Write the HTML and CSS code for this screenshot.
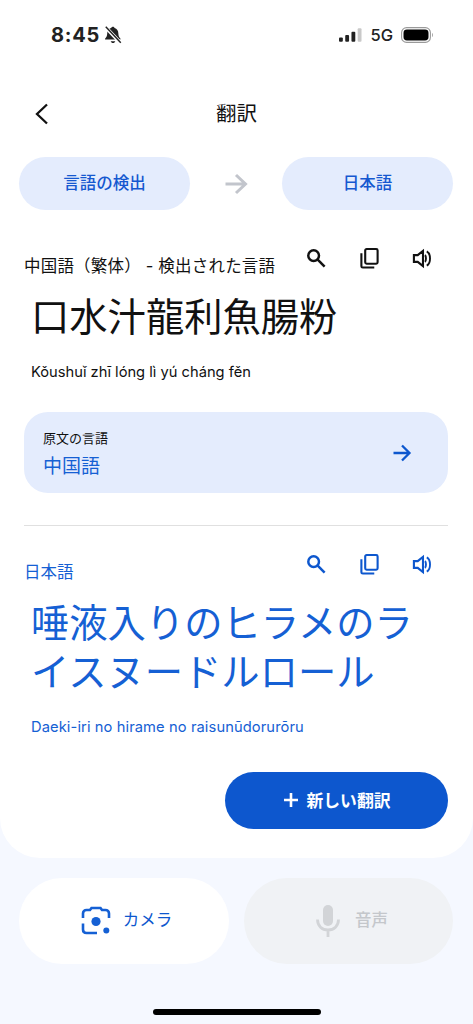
FILE: index.html
```html
<!DOCTYPE html>
<html lang="ja">
<head>
    <meta charset="UTF-8">
    <meta name="viewport" content="width=device-width, initial-scale=1.0">
    <title>翻訳</title>
    <link rel="stylesheet" href="styles.css">
</head>
<body>
    <div class="sheet">
        <!-- status bar -->
        <div class="status-bar">
            <div class="status-left">
                <span class="time">8:45</span>
                <svg class="bell" width="20" height="20" viewBox="0 0 18 18">
                    <path d="M9 1.500c.8 0 1.300.5 1.400 1.200 2.200.6 3.400 2.400 3.400 4.800 0 2.600.8 3.600 1.800 4.600.4.4.2 1-.4 1H2.400c-.6 0-.8-.6-.4-1 1-1 1.800-2 1.800-4.600 0-2.400 1.200-4.200 3.400-4.800C7.700 2 8.200 1.500 9 1.500z" fill="#222"/>
                    <path d="M7 14.600h4c-.2 1-1 1.700-2 1.700s-1.800-.7-2-1.700z" fill="#222"/>
                    <path d="M2 1.500l14 15" stroke="#fff" stroke-width="3.200"/>
                    <path d="M2.500 1.500l13.500 14.500" stroke="#222" stroke-width="1.300"/>
                </svg>
            </div>
            <div class="status-right">
                <svg width="23" height="15" viewBox="0 0 24 15">
                    <rect x="0" y="9.500" width="4" height="4.500" rx="1" fill="#222"/>
                    <rect x="6.500" y="7" width="4" height="7" rx="1" fill="#222"/>
                    <rect x="13" y="3.500" width="4" height="10.500" rx="1" fill="#222"/>
                    <rect x="19.500" y="0" width="4" height="14" rx="1" fill="#c9c9c9"/>
                </svg>
                <span class="network">5G</span>
                <svg width="32" height="16" viewBox="0 0 32 16">
                    <rect x="0.600" y="0.600" width="28.800" height="14.800" rx="5" fill="none" stroke="#9a9a9a" stroke-width="1.100"/>
                    <rect x="2.500" y="2.500" width="25" height="11" rx="3.400" fill="#000"/>
                    <path d="M31 6v4c.7-.3 1-1.200 1-2s-.3-1.700-1-2z" fill="#a8a8a8"/>
                </svg>
            </div>
        </div>

        <!-- title -->
        <div class="nav">
            <svg class="back" width="16" height="24" viewBox="0 0 16 24">
                <path d="M13 2.500L3 12l10 9.500" fill="none" stroke="#111" stroke-width="2.300"/>
            </svg>
            <h1>翻訳</h1>
        </div>

        <!-- language choice -->
        <div class="lang-row">
            <div class="lang-pill">言語の検出</div>
            <svg width="24" height="22" viewBox="0 0 24 22">
                <path d="M1.500 11h20M12 2l9.500 9-9.500 9" fill="none" stroke="#c2c5cc" stroke-width="3"/>
            </svg>
            <div class="lang-pill">日本語</div>
        </div>

        <!-- source -->
        <section class="source">
            <div class="label-row">
                <span class="lang-label">中国語（繁体） - 検出された言語</span>
                <div class="actions">
                    <svg width="21" height="21" viewBox="0 0 22 22"><use href="#icon-search"/></svg>
                    <svg width="21" height="23" viewBox="0 0 22 24"><use href="#icon-copy"/></svg>
                    <svg width="21" height="21" viewBox="0 0 22 22"><use href="#icon-sound"/></svg>
                </div>
            </div>
            <p class="big-text">口水汁龍利魚腸粉</p>
            <p class="reading">Kǒushuǐ zhī lóng lì yú cháng fěn</p>
            <div class="source-card">
                <div class="card-text">
                    <div class="card-label">原文の言語</div>
                    <div class="card-value">中国語</div>
                </div>
                <svg width="20" height="18" viewBox="0 0 20 18">
                    <path d="M1.500 9h16M10 1.500L17.500 9 10 16.500" fill="none" stroke="#0d57ce" stroke-width="2.300"/>
                </svg>
            </div>
        </section>

        <hr class="divider">

        <!-- translation -->
        <section class="target">
            <div class="label-row">
                <span class="lang-label">日本語</span>
                <div class="actions">
                    <svg width="21" height="21" viewBox="0 0 22 22"><use href="#icon-search"/></svg>
                    <svg width="21" height="23" viewBox="0 0 22 24"><use href="#icon-copy"/></svg>
                    <svg width="21" height="21" viewBox="0 0 22 22"><use href="#icon-sound"/></svg>
                </div>
            </div>
            <p class="big-text">唾液入りのヒラメのライスヌードルロール</p>
            <p class="reading">Daeki-iri no hirame no raisunūdorurōru</p>
        </section>

        <div class="new-row">
            <button class="new-btn">
                <svg width="16" height="16" viewBox="0 0 16 16">
                    <path d="M8 1v14M1 8h14" stroke="#fff" stroke-width="2.600"/>
                </svg>
                新しい翻訳
            </button>
        </div>
    </div>

    <!-- input modes -->
    <div class="mode-row">
        <div class="mode-pill">
            <svg width="30" height="30" viewBox="0 0 30 30">
                <path d="M2 12V7.500C2 5.500 3.500 4 5.500 4H9l1.500-2h9L21 4h3.500C26.500 4 28 5.500 28 7.500V12" fill="none" stroke="#1560d4" stroke-width="2.600"/>
                <path d="M2 17.500v6C2 25.800 3.500 27 5.500 27H16" fill="none" stroke="#1560d4" stroke-width="2.600"/>
                <circle cx="15" cy="15.500" r="4.600" fill="#1560d4"/>
                <circle cx="25.300" cy="24.500" r="3" fill="#1560d4"/>
            </svg>
            <span>カメラ</span>
        </div>
        <div class="mode-pill off">
            <svg width="24" height="34" viewBox="0 0 24 34">
                <rect x="7" y="1" width="10" height="21" rx="5" fill="#d2d4d7"/>
                <path d="M1.500 15.500c0 6.500 4.500 10.500 10.500 10.500s10.500-4 10.500-10.500M12 26v7" fill="none" stroke="#d2d4d7" stroke-width="2.800"/>
            </svg>
            <span>音声</span>
        </div>
    </div>

    <div class="home-bar"></div>

    <!-- shared icons -->
    <svg class="defs" width="0" height="0">
        <defs>
            <g id="icon-search" fill="none" stroke="currentColor" stroke-width="2.600">
                <circle cx="8" cy="8" r="5.600"/>
                <path d="M12 12l7.500 7.500"/>
            </g>
            <g id="icon-copy" fill="none" stroke="currentColor" stroke-width="2.200">
                <rect x="6.500" y="2" width="13" height="15.500" rx="1.500"/>
                <path d="M2.500 6.500V20c0 1 .6 1.500 1.500 1.500h12"/>
            </g>
            <g id="icon-sound">
                <path d="M2 7.500h4L11.500 3v16L6 14.500H2z" fill="none" stroke="currentColor" stroke-width="2.200"/>
                <path d="M13.500 7.500c1.500 1 1.500 6 0 7" fill="none" stroke="currentColor" stroke-width="2"/>
                <path d="M15.500 3.500c4.500 2.500 4.500 12.500 0 15" fill="none" stroke="currentColor" stroke-width="2"/>
            </g>
        </defs>
    </svg>
</body>
</html>
```

FILE: styles.css
```css
body {
    font-family: "Inter", "Noto Sans CJK JP", sans-serif;
    background-color: #f5f8ff;
    margin: 0;
    padding: 0;
    color: #111;
}

p, h1 {
    margin: 0;
    font-weight: 400;
}

.defs {
    display: block;
}

.sheet {
    background: #fff;
    height: 858px;
    border-radius: 0 0 40px 40px;
    box-sizing: border-box;
    overflow: hidden;
}

.status-bar {
    display: flex;
    justify-content: space-between;
    align-items: center;
    height: 24px;
    padding: 23px 40px 0 51px;
}

.status-left, .status-right {
    display: flex;
    align-items: center;
}

.time {
    font-size: 20px;
    font-weight: 700;
    letter-spacing: 0.8px;
    color: #222;
}

.bell {
    margin-left: 3px;
}

.status-right {
    gap: 8px;
}

.network {
    font-size: 16.5px;
    font-weight: 500;
    color: #222;
}

.nav {
    position: relative;
    height: 40px;
    margin-top: 47px;
    display: flex;
    align-items: center;
    justify-content: center;
}

.nav h1 {
    font-size: 20.5px;
    line-height: 40px;
}

.back {
    position: absolute;
    left: 34px;
    top: 8px;
}

.lang-row {
    display: flex;
    justify-content: space-between;
    align-items: center;
    margin-top: 23px;
    padding: 0 20px 0 19px;
}

.lang-pill {
    width: 171px;
    height: 53px;
    line-height: 53px;
    text-align: center;
    background: #e4ecfd;
    border-radius: 27px;
    color: #1558d0;
    font-size: 16.5px;
    font-weight: 500;
}

.source, .target {
    padding: 0 25px;
}

.source {
    margin-top: 27px;
}

.target {
    margin-top: 22px;
    color: #1560d4;
}

.label-row {
    position: relative;
    height: 38px;
    display: flex;
    align-items: flex-end;
    justify-content: space-between;
}

.lang-label {
    font-size: 16.5px;
    line-height: 24px;
    margin-bottom: 2px;
    margin-left: -1px;
}

.source .lang-label {
    margin-bottom: -3px;
    letter-spacing: 0.2px;
}

.actions {
    position: absolute;
    right: 15px;
    top: 10px;
    display: flex;
    gap: 32px;
    align-items: center;
}

.target .actions {
    top: 5px;
    color: #0d57ce;
}

.big-text {
    font-size: 38.3px;
    line-height: 49px;
    margin: 18px 0 0 6px;
}

.target .big-text {
    margin-top: 13px;
    padding-right: 30px;
}

.reading {
    font-size: 14.7px;
    line-height: 20px;
    margin: 20px 0 0 6px;
}

.target .reading {
    margin-top: 20px;
    letter-spacing: 0.1px;
}

.source-card {
    display: flex;
    justify-content: space-between;
    align-items: center;
    height: 81px;
    box-sizing: border-box;
    margin: 30px 0 0 -1px;
    padding: 0 36px 0 19px;
    width: 424px;
    background: #e4ecfd;
    border-radius: 24px;
}

.card-text {
    padding-top: 5px;
}

.card-label {
    font-size: 13px;
    line-height: 18px;
}

.card-value {
    font-size: 19px;
    line-height: 28px;
    color: #1560d4;
    margin-top: 6px;
}

.divider {
    border: none;
    border-top: 1px solid #e0e0e0;
    margin: 32px 25px 0 24px;
}

.new-row {
    display: flex;
    justify-content: flex-end;
    margin-top: 35px;
    padding-right: 25px;
}

.new-btn {
    display: flex;
    align-items: center;
    justify-content: center;
    gap: 8px;
    width: 223px;
    height: 57px;
    border: none;
    border-radius: 29px;
    background-color: #0d57ce;
    color: #fff;
    font-family: inherit;
    font-size: 16.8px;
    font-weight: 700;
    padding-bottom: 2px;
}

.mode-row {
    display: flex;
    gap: 15px;
    margin-top: 20px;
    padding: 0 20px 0 19px;
}

.mode-pill {
    flex: 1;
    box-sizing: border-box;
    height: 86px;
    display: flex;
    align-items: center;
    justify-content: center;
    gap: 12px;
    padding-left: 5px;
    background: #fff;
    border-radius: 43px;
    color: #0d57ce;
    font-size: 16.5px;
}

.mode-pill:first-child {
    flex: none;
    width: 210px;
}

.mode-pill span {
    margin-bottom: 5px;
}

.mode-pill.off {
    background: #f0f2f5;
    color: #c4c7cb;
    font-weight: 500;
    gap: 15px;
    padding-left: 7px;
}

.home-bar {
    width: 168px;
    height: 6px;
    margin: 45px auto 0;
    background: #000;
    border-radius: 3px;
}
```
